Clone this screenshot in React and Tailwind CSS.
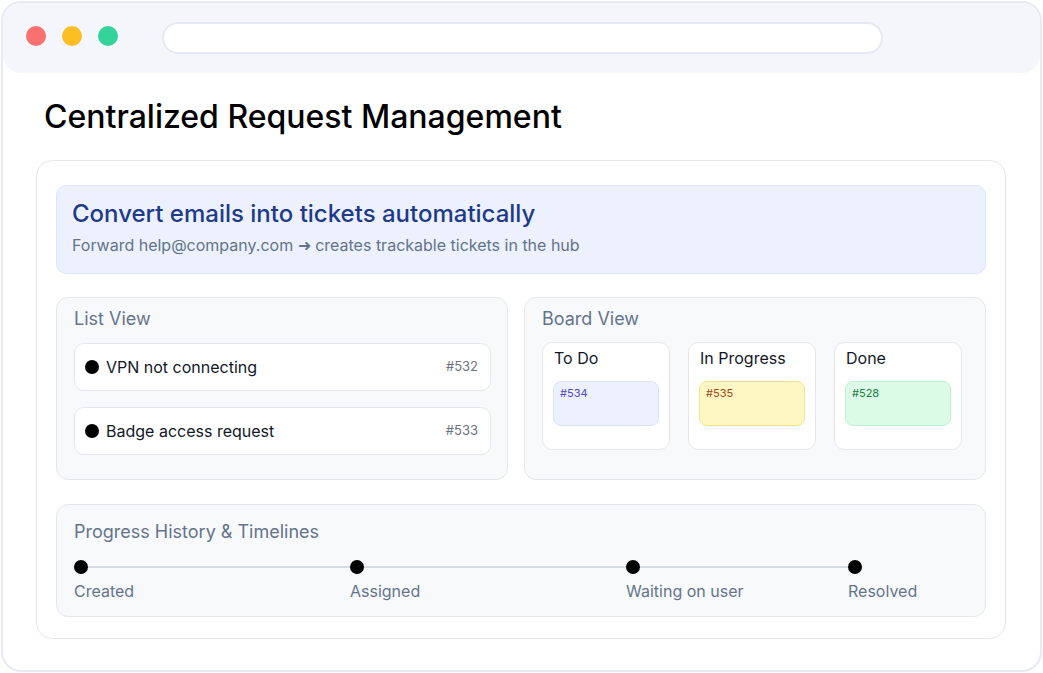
export default function App() {
  const columns = [
    { title: "To Do", id: "#534", chip: "bg-[#edf1fd] border-[#dbe3fa] text-[#4f46c8]" },
    { title: "In Progress", id: "#535", chip: "bg-[#fef7c3] border-[#fbe08a] text-[#a1441a]" },
    { title: "Done", id: "#528", chip: "bg-[#dcfbe6] border-[#bdf3cf] text-[#1f7a43]" },
  ];
  const steps = [
    { label: "Created", w: "w-[276px]" },
    { label: "Assigned", w: "w-[276px]" },
    { label: "Waiting on user", w: "w-[222px]" },
    { label: "Resolved", w: "" },
  ];

  return (
    <div className="w-[1043px] h-[673px] bg-white p-[1px] font-['Inter',sans-serif]">
      <div className="w-[1041px] h-[671px] border-2 border-[#e7e9f3] rounded-[20px] overflow-hidden">
        {/* window bar */}
        <div className="h-[70px] bg-[#f4f6fb] rounded-[18px] flex items-start pl-[23px]">
          <div className="flex gap-4 mt-[23px]">
            <span className="w-5 h-5 rounded-full bg-[#f87171]" />
            <span className="w-5 h-5 rounded-full bg-[#fbbf24]" />
            <span className="w-5 h-5 rounded-full bg-[#34d399]" />
          </div>
          <div className="ml-[44px] mt-[19px] w-[721px] h-[32px] bg-white border-2 border-[#e3e8f3] rounded-full" />
        </div>

        <h1 className="ml-[41px] mt-[24px] text-[32px] leading-[40px] font-medium text-black">
          Centralized Request Management
        </h1>

        <div className="ml-[33px] mt-[23px] w-[970px] h-[479px] border border-[#e5e7eb] rounded-2xl bg-white px-[19px] pt-6">
          {/* banner */}
          <div className="h-[89px] rounded-[10px] bg-[#ecf1fd] border border-[#dbe5fb] px-[15px] pt-[13px]">
            <div className="text-[24px] leading-[30px] font-medium text-[#1e3a8a]">
              Convert emails into tickets automatically
            </div>
            <div className="mt-[4px] text-base leading-6 text-[#64748b]">
              Forward help@company.com ➜ creates trackable tickets in the hub
            </div>
          </div>

          <div className="mt-[23px] flex gap-4 h-[183px]">
            {/* list view */}
            <div className="w-[452px] bg-[#f8f9fb] border border-[#e5e7eb] rounded-xl pl-[17px] pr-4 pt-[9px]">
              <div className="text-lg leading-6 text-[#64748b]">List View</div>
              <div className="mt-[12px] flex flex-col gap-4">
                {[
                  ["VPN not connecting", "#532"],
                  ["Badge access request", "#533"],
                ].map(([t, id]) => (
                  <div
                    key={id}
                    className="h-[48px] bg-white border border-[#e5e7eb] rounded-[10px] flex items-center pl-[10px] pr-3"
                  >
                    <span className="w-[14px] h-[14px] rounded-full bg-black" />
                    <span className="ml-[7px] text-base text-[#111827]">{t}</span>
                    <span className="ml-auto text-[13px] text-[#6b7280]">{id}</span>
                  </div>
                ))}
              </div>
            </div>

            {/* board view */}
            <div className="flex-1 bg-[#f8f9fb] border border-[#e5e7eb] rounded-xl pl-[17px] pt-[9px]">
              <div className="text-lg leading-6 text-[#64748b]">Board View</div>
              <div className="mt-[11px] flex gap-[18px]">
                {columns.map((c) => (
                  <div
                    key={c.title}
                    className="w-[128px] h-[108px] bg-white border border-[#e5e7eb] rounded-[10px] px-[10px] pt-[3px]"
                  >
                    <div className="pl-[1px] text-base leading-6 text-[#111827]">{c.title}</div>
                    <div className={`mt-[11px] h-[45px] rounded-lg border px-[6px] pt-[3px] text-[11px] leading-4 ${c.chip}`}>
                      {c.id}
                    </div>
                  </div>
                ))}
              </div>
            </div>
          </div>

          {/* timeline */}
          <div className="mt-[24px] h-[113px] bg-[#f8f9fb] border border-[#e5e7eb] rounded-xl pl-[17px] pr-4 pt-[15px]">
            <div className="text-lg leading-6 text-[#64748b]">Progress History &amp; Timelines</div>
            <div className="mt-[16px] flex">
              {steps.map((s, i) => (
                <div key={s.label} className={s.w}>
                  <div className="flex items-center">
                    <span className="w-[14px] h-[14px] rounded-full bg-black shrink-0" />
                    {i < steps.length - 1 && <span className="flex-1 h-[2px] bg-[#d3dae6]" />}
                  </div>
                  <div className="mt-[5px] text-base leading-6 text-[#64748b]">{s.label}</div>
                </div>
              ))}
            </div>
          </div>
        </div>
      </div>
    </div>
  );
}
